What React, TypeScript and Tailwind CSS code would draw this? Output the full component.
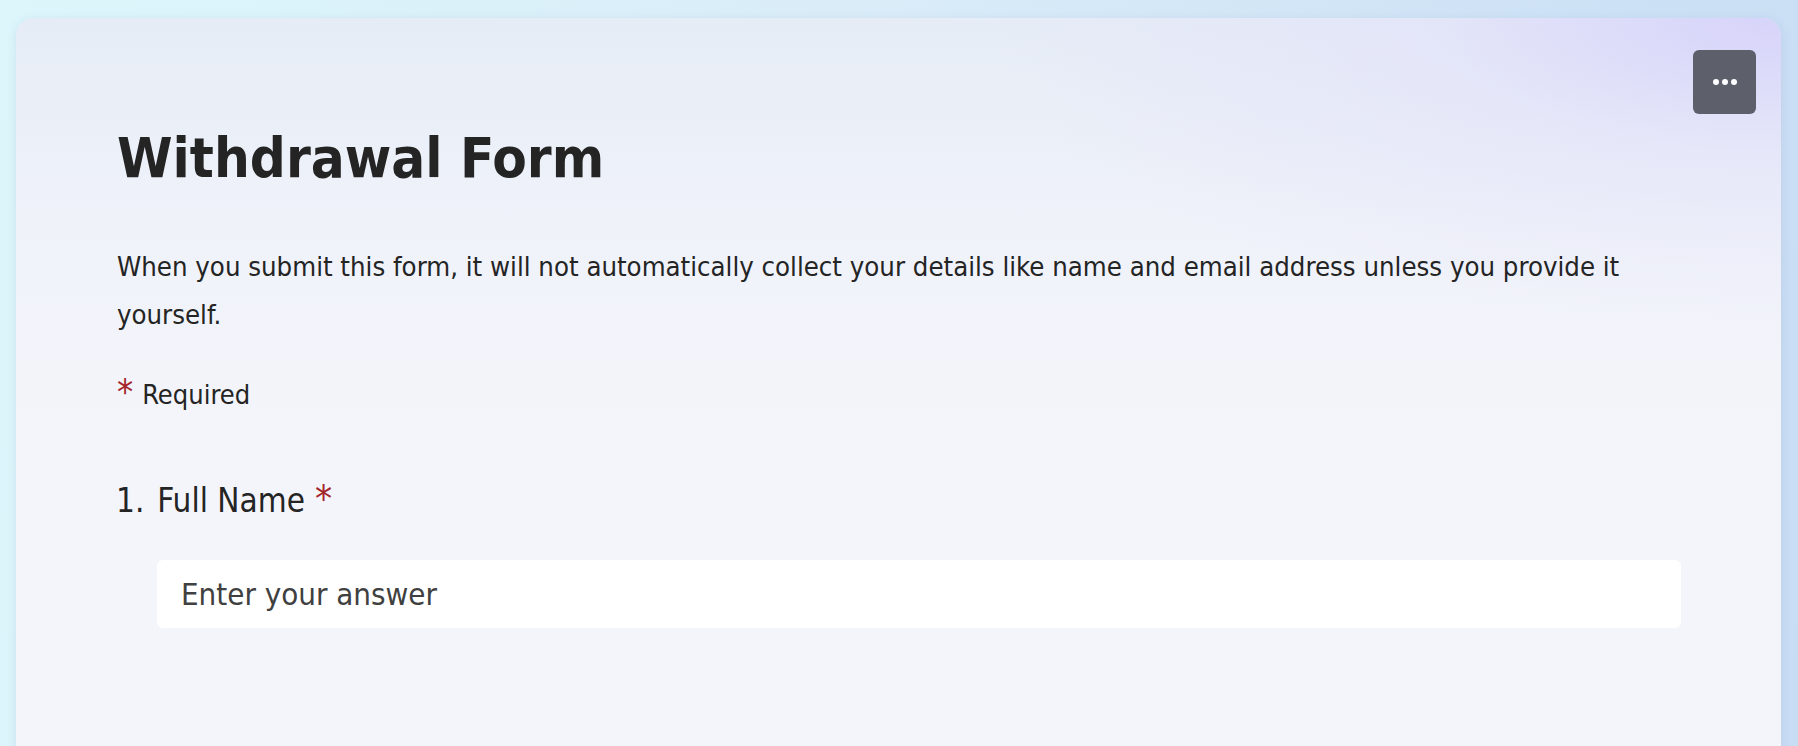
export default function App() {
  return (
    <div
      className="min-h-[746px] w-full overflow-hidden bg-[linear-gradient(100deg,#dcf6fb_0%,#d9ecf8_45%,#c8dcf4_100%)] pl-[16px] pr-[17px] pt-[18px]"
      style={{ fontFamily: '"DejaVu Sans Condensed", Tahoma, "DejaVu Sans", sans-serif' }}
    >
      <div className="relative h-[760px] rounded-[18px] bg-[linear-gradient(180deg,#e6ecf6_0px,#eff2f9_200px,#f4f5fb_420px)] shadow-[0_2px_10px_rgba(120,140,180,0.18)]">
        {/* lavender tint top right */}
        <div className="pointer-events-none absolute inset-0 rounded-[18px] bg-[radial-gradient(ellipse_45%_40%_at_100%_0%,rgba(214,210,250,0.95)_0%,rgba(224,223,250,0.5)_45%,rgba(240,241,250,0)_100%)]" />

        <button className="absolute right-[25px] top-[32px] flex h-[64px] w-[63px] items-center justify-center gap-[3px] rounded-[6px] bg-[#5d5f6b]">
          <span className="h-[6px] w-[6px] rounded-full bg-white" />
          <span className="h-[6px] w-[6px] rounded-full bg-white" />
          <span className="h-[6px] w-[6px] rounded-full bg-white" />
        </button>

        <div className="relative pl-[101px] pr-[100px] pt-[100px] text-[#242424]">
          <h1 className="text-[56px] font-bold leading-[80px]">Withdrawal Form</h1>

          <p className="mt-[45px] pr-[60px] text-[27.3px] leading-[48px]">
            When you submit this form, it will not automatically collect your details like name and email address unless you provide it yourself.
          </p>

          <div className="mt-[33px] flex items-baseline text-[27px] leading-[40px]">
            <span className="mr-[9px] text-[36px] leading-[40px] text-[#a4262c]">*</span>
            <span>Required</span>
          </div>

          <div className="mt-[62px] flex items-baseline text-[33px] leading-[44px]">
            <span className="mr-[13px] -ml-[1px]">1.</span>
            <span>Full Name</span>
            <span className="ml-[10px] text-[38px] leading-[44px] text-[#a4262c]">*</span>
          </div>

          <div className="mt-[37px] ml-[40px]">
            <input
              className="h-[68px] w-full rounded-[6px] bg-white px-[24px] text-[31px] text-[#242424] outline-none placeholder:text-[#404040]"
              placeholder="Enter your answer"
            />
          </div>
        </div>
      </div>
    </div>
  );
}
